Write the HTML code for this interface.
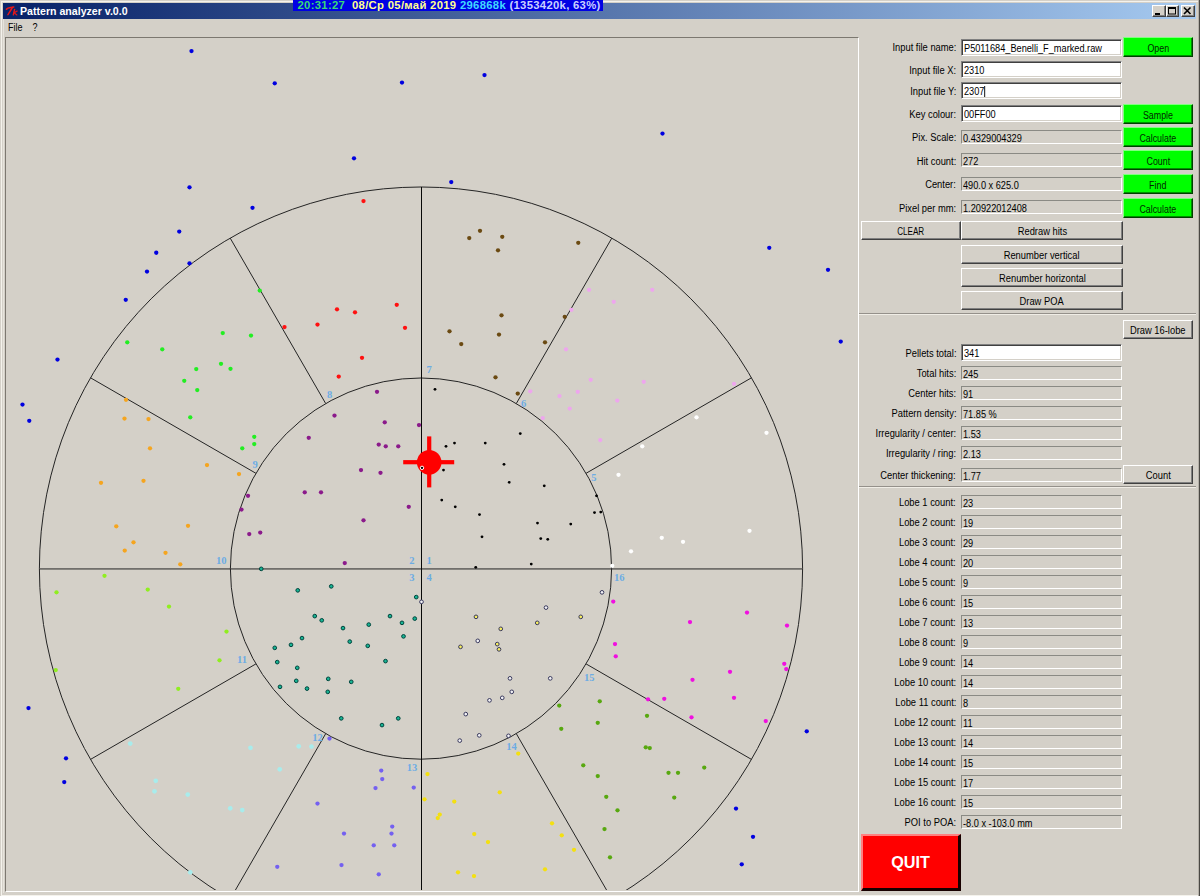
<!DOCTYPE html>
<html><head><meta charset="utf-8"><title>Pattern analyzer v.0.0</title>
<style>
html,body{margin:0;padding:0}
body{width:1200px;height:896px;overflow:hidden;background:#d4d0c8;position:relative;font-family:"Liberation Sans",sans-serif;font-size:10px;color:#000}
div{box-sizing:border-box}
#title{position:absolute;left:3px;top:3px;width:1193px;height:16px;background:linear-gradient(90deg,#0a246a 0%,#0a246a 2%,#a6caf0 100%)}
#title .ico{position:absolute;left:2.2px;top:2.1px}
#title .tt{position:absolute;left:17px;top:0;height:16px;line-height:16px;color:#fff;font-weight:bold;font-size:10.6px;white-space:nowrap}
.wb{position:absolute;top:2px;width:13.5px;height:12px;background:#d4d0c8;border:1px solid;border-color:#fff #404040 #404040 #fff;box-shadow:inset -1px -1px 0 #808080}
#ovl{position:absolute;left:293px;top:0;width:309.5px;height:11px;background:#0000e4;color:#fff;font-weight:bold;font-size:11.3px;line-height:11px;white-space:nowrap;overflow:hidden;padding-left:4.5px;letter-spacing:0.3px}
#frame{position:absolute;left:1px;top:1px;width:1199px;height:895px;border:1px solid;border-color:#f4f2ec transparent #f4f2ec #f4f2ec;border-right:0;pointer-events:none}
#frameR{position:absolute;left:1198px;top:0;width:2px;height:896px;background:linear-gradient(90deg,#b4b0a8 0,#b4b0a8 45%,#4a4844 45%,#4a4844 100%)}
#menu{position:absolute;left:8px;top:21px;height:14px;line-height:14px;white-space:pre;transform:scaleX(.9);transform-origin:0 50%}
#canvas{position:absolute;left:5px;top:37px;width:854px;height:855px;border:1px solid;border-color:#7c7870 #fff #fff #7c7870}
.lb{position:absolute;left:700px;width:256px;height:16px;line-height:16px;text-align:right;white-space:nowrap}
.en{position:absolute;left:961px;width:161px;white-space:nowrap}
.en.ed{height:17px;line-height:12px;padding-top:3.1px;background:#fff;border:1px solid;border-color:#808080 #fff #fff #808080;padding-left:2px;box-shadow:inset 1px 1px 0 #404040,inset -1px -1px 0 #d4d0c8}
.en.ro{height:14px;line-height:12px;padding-top:2px;background:#d4d0c8;border:1px solid;border-color:#8a8a84 #fff #fff #8a8a84;padding-left:0.6px}
.lb span{display:inline-block;transform:scaleX(.935);transform-origin:100% 50%}
.en span{display:inline-block;transform:scaleX(.92);transform-origin:0 50%}
.bt span{display:inline-block;transform:scaleX(.935);transform-origin:50% 50%}
.caret{display:inline-block;width:1px;height:11px;background:#000;vertical-align:-2px}
.bt{position:absolute;text-align:center;white-space:nowrap;background:#d4d0c8;border:1px solid;border-color:#fff #404040 #404040 #fff;box-shadow:inset -1px -1px 0 #808080}
.bt.g span{transform:scaleX(.885)}
.bt.g{color:#002800;background:#00ff00;border-color:#80ff80 #004000 #004000 #80ff80;box-shadow:inset -1px -1px 0 #009000}
.sep{position:absolute;left:859px;width:337px;height:2px;border-top:1px solid #94908a;border-bottom:1px solid #f0ede6}
.quit{position:absolute;left:861px;top:834px;width:100px;height:56.6px;background:#ff0000;color:#fff;font-weight:bold;font-size:16.2px;line-height:52px;text-align:center;border:2px solid;border-color:#ff8080 #180000 #180000 #ff8080;border-bottom-width:3px;border-right-width:3px}
</style></head><body>
<div id="frame"></div><div id="frameR"></div>
<div id="title"><svg class="ico" width="13.6" height="12" viewBox="0 0 15 15" preserveAspectRatio="none"><g fill="none" stroke="#e81818" stroke-linecap="round"><path d="M1.6 5.2 C3.2 3.2 6.2 3.6 9.6 2.6" stroke-width="1.9"/><path d="M8.2 3 C6.6 6.2 5 9 3.2 12.2" stroke-width="1.7"/><path d="M10.6 5.6 L9.2 12.2" stroke-width="1.6"/><path d="M13.4 7.6 L10.2 9.8 L13 12.3" stroke-width="1.5"/></g></svg><span class="tt">Pattern analyzer v.0.0</span>
<div class="wb" style="left:1149px"><svg width="11" height="10" style="position:absolute;left:0;top:0"><rect x="2" y="7" width="5" height="2" fill="#000"/></svg></div>
<div class="wb" style="left:1162.6px"><svg width="11" height="10" style="position:absolute;left:0;top:0"><rect x="1.5" y="1.5" width="7" height="6.5" fill="none" stroke="#000"/><rect x="1" y="1" width="8" height="2" fill="#000"/></svg></div>
<div class="wb" style="left:1178px"><svg width="11" height="10" style="position:absolute;left:0;top:0"><path d="M2 1.5 L8.5 8 M8.5 1.5 L2 8" stroke="#000" stroke-width="1.6" fill="none"/></svg></div>
</div>
<div id="ovl"><span style="color:#38d878">20:31:27</span>&nbsp; <span style="color:#ffff90">08/Ср 05/май 2019</span> <span style="color:#40d8ff">296868k</span> <span style="color:#c8d0ff">(1353420k, 63%)</span></div>
<div style="position:absolute;left:3px;top:19px;width:1px;height:874px;background:#e6e3dc"></div>
<div id="menu">File    ?</div>
<div id="canvas"></div>
<svg id="cv" width="1200" height="896" viewBox="0 0 1200 896" style="position:absolute;left:0;top:0">
<defs><clipPath id="cp"><rect x="7" y="40" width="851" height="850"/></clipPath></defs>
<g clip-path="url(#cp)">
<g fill="none" stroke="#242424" stroke-width="1">
<circle cx="421.0" cy="568.6" r="381.6"/>
<circle cx="421.0" cy="568.6" r="190.6"/>
<line x1="39.39999999999998" y1="568.95" x2="802.6" y2="568.95"/>
<line x1="421.5" y1="187.0" x2="421.5" y2="950.2" stroke="#080808" stroke-width="1"/>
<line x1="586.06" y1="473.30" x2="751.48" y2="377.80"/>
<line x1="516.30" y1="403.54" x2="611.80" y2="238.12"/>
<line x1="325.70" y1="403.54" x2="230.20" y2="238.12"/>
<line x1="255.94" y1="473.30" x2="90.52" y2="377.80"/>
<line x1="255.94" y1="663.90" x2="90.52" y2="759.40"/>
<line x1="325.70" y1="733.66" x2="230.20" y2="899.08"/>
<line x1="516.30" y1="733.66" x2="611.80" y2="899.08"/>
<line x1="586.06" y1="663.90" x2="751.48" y2="759.40"/>
</g>
<g fill="#ff0000"><circle cx="429.2" cy="462.2" r="12.3"/><rect x="403.2" y="460.1" width="51" height="4.2"/><rect x="427.1" y="436.4" width="4.2" height="51"/></g>
<circle cx="191.50" cy="51.10" r="2.15" fill="#0000e0"/>
<circle cx="274.75" cy="83.35" r="2.15" fill="#0000e0"/>
<circle cx="189.50" cy="187.35" r="2.15" fill="#0000e0"/>
<circle cx="252.50" cy="207.85" r="2.15" fill="#0000e0"/>
<circle cx="179.25" cy="231.60" r="2.15" fill="#0000e0"/>
<circle cx="156.25" cy="252.75" r="2.15" fill="#0000e0"/>
<circle cx="402.00" cy="82.60" r="2.15" fill="#0000e0"/>
<circle cx="484.50" cy="75.10" r="2.15" fill="#0000e0"/>
<circle cx="354.00" cy="158.35" r="2.15" fill="#0000e0"/>
<circle cx="451.25" cy="182.10" r="2.15" fill="#0000e0"/>
<circle cx="662.50" cy="133.60" r="2.15" fill="#0000e0"/>
<circle cx="769.25" cy="247.85" r="2.15" fill="#0000e0"/>
<circle cx="189.50" cy="263.35" r="2.15" fill="#0000e0"/>
<circle cx="147.00" cy="271.60" r="2.15" fill="#0000e0"/>
<circle cx="125.75" cy="299.85" r="2.15" fill="#0000e0"/>
<circle cx="57.50" cy="359.60" r="2.15" fill="#0000e0"/>
<circle cx="22.50" cy="404.60" r="2.15" fill="#0000e0"/>
<circle cx="29.25" cy="420.85" r="2.15" fill="#0000e0"/>
<circle cx="828.00" cy="269.85" r="2.15" fill="#0000e0"/>
<circle cx="840.75" cy="341.60" r="2.15" fill="#0000e0"/>
<circle cx="28.50" cy="708.10" r="2.15" fill="#0000e0"/>
<circle cx="66.00" cy="758.35" r="2.15" fill="#0000e0"/>
<circle cx="64.25" cy="782.10" r="2.15" fill="#0000e0"/>
<circle cx="806.75" cy="731.35" r="2.15" fill="#0000e0"/>
<circle cx="736.00" cy="808.60" r="2.15" fill="#0000e0"/>
<circle cx="753.00" cy="836.85" r="2.15" fill="#0000e0"/>
<circle cx="741.75" cy="864.35" r="2.15" fill="#0000e0"/>
<circle cx="363.50" cy="201.10" r="2.15" fill="#ff1010"/>
<circle cx="284.50" cy="327.10" r="2.15" fill="#ff1010"/>
<circle cx="396.75" cy="304.85" r="2.15" fill="#ff1010"/>
<circle cx="337.00" cy="309.35" r="2.15" fill="#ff1010"/>
<circle cx="355.00" cy="312.35" r="2.15" fill="#ff1010"/>
<circle cx="317.50" cy="324.60" r="2.15" fill="#ff1010"/>
<circle cx="405.00" cy="327.85" r="2.15" fill="#ff1010"/>
<circle cx="362.00" cy="357.85" r="2.15" fill="#ff1010"/>
<circle cx="338.75" cy="376.60" r="2.15" fill="#ff1010"/>
<circle cx="469.25" cy="238.10" r="2.15" fill="#6b4a12"/>
<circle cx="480.00" cy="230.85" r="2.15" fill="#6b4a12"/>
<circle cx="502.25" cy="236.85" r="2.15" fill="#6b4a12"/>
<circle cx="498.00" cy="250.35" r="2.15" fill="#6b4a12"/>
<circle cx="578.25" cy="242.85" r="2.15" fill="#6b4a12"/>
<circle cx="501.50" cy="315.35" r="2.15" fill="#6b4a12"/>
<circle cx="564.75" cy="316.85" r="2.15" fill="#6b4a12"/>
<circle cx="449.50" cy="331.35" r="2.15" fill="#6b4a12"/>
<circle cx="499.00" cy="334.60" r="2.15" fill="#6b4a12"/>
<circle cx="461.25" cy="344.10" r="2.15" fill="#6b4a12"/>
<circle cx="545.00" cy="342.35" r="2.15" fill="#6b4a12"/>
<circle cx="495.50" cy="377.35" r="2.15" fill="#6b4a12"/>
<circle cx="517.75" cy="393.60" r="2.15" fill="#6b4a12"/>
<circle cx="259.75" cy="290.60" r="2.15" fill="#22ee22"/>
<circle cx="222.75" cy="333.10" r="2.15" fill="#22ee22"/>
<circle cx="251.00" cy="335.60" r="2.15" fill="#22ee22"/>
<circle cx="127.25" cy="342.35" r="2.15" fill="#22ee22"/>
<circle cx="162.25" cy="349.35" r="2.15" fill="#22ee22"/>
<circle cx="221.00" cy="363.85" r="2.15" fill="#22ee22"/>
<circle cx="230.50" cy="368.85" r="2.15" fill="#22ee22"/>
<circle cx="196.25" cy="369.10" r="2.15" fill="#22ee22"/>
<circle cx="184.25" cy="380.85" r="2.15" fill="#22ee22"/>
<circle cx="197.25" cy="390.10" r="2.15" fill="#22ee22"/>
<circle cx="190.25" cy="417.35" r="2.15" fill="#22ee22"/>
<circle cx="254.25" cy="436.85" r="2.15" fill="#22ee22"/>
<circle cx="254.25" cy="444.10" r="2.15" fill="#22ee22"/>
<circle cx="242.25" cy="448.35" r="2.15" fill="#22ee22"/>
<circle cx="126.00" cy="399.85" r="2.15" fill="#f5a51f"/>
<circle cx="124.50" cy="418.60" r="2.15" fill="#f5a51f"/>
<circle cx="148.50" cy="419.10" r="2.15" fill="#f5a51f"/>
<circle cx="150.00" cy="448.35" r="2.15" fill="#f5a51f"/>
<circle cx="207.00" cy="465.10" r="2.15" fill="#f5a51f"/>
<circle cx="239.00" cy="474.10" r="2.15" fill="#f5a51f"/>
<circle cx="101.00" cy="482.85" r="2.15" fill="#f5a51f"/>
<circle cx="143.50" cy="480.85" r="2.15" fill="#f5a51f"/>
<circle cx="116.25" cy="526.35" r="2.15" fill="#f5a51f"/>
<circle cx="188.00" cy="525.85" r="2.15" fill="#f5a51f"/>
<circle cx="133.50" cy="542.35" r="2.15" fill="#f5a51f"/>
<circle cx="124.75" cy="550.60" r="2.15" fill="#f5a51f"/>
<circle cx="165.50" cy="552.85" r="2.15" fill="#f5a51f"/>
<circle cx="180.25" cy="564.35" r="2.15" fill="#f5a51f"/>
<circle cx="377.00" cy="391.85" r="2.15" fill="#8b1a8b"/>
<circle cx="334.50" cy="415.60" r="2.15" fill="#8b1a8b"/>
<circle cx="384.75" cy="422.35" r="2.15" fill="#8b1a8b"/>
<circle cx="419.00" cy="425.10" r="2.15" fill="#8b1a8b"/>
<circle cx="308.75" cy="437.85" r="2.15" fill="#8b1a8b"/>
<circle cx="378.75" cy="444.60" r="2.15" fill="#8b1a8b"/>
<circle cx="385.75" cy="446.35" r="2.15" fill="#8b1a8b"/>
<circle cx="398.25" cy="446.35" r="2.15" fill="#8b1a8b"/>
<circle cx="248.00" cy="495.85" r="2.15" fill="#8b1a8b"/>
<circle cx="241.50" cy="509.60" r="2.15" fill="#8b1a8b"/>
<circle cx="249.25" cy="534.10" r="2.15" fill="#8b1a8b"/>
<circle cx="260.25" cy="532.60" r="2.15" fill="#8b1a8b"/>
<circle cx="361.00" cy="470.10" r="2.15" fill="#8b1a8b"/>
<circle cx="380.50" cy="472.85" r="2.15" fill="#8b1a8b"/>
<circle cx="304.75" cy="492.35" r="2.15" fill="#8b1a8b"/>
<circle cx="321.00" cy="492.35" r="2.15" fill="#8b1a8b"/>
<circle cx="408.75" cy="506.85" r="2.15" fill="#8b1a8b"/>
<circle cx="363.50" cy="520.35" r="2.15" fill="#8b1a8b"/>
<circle cx="344.75" cy="563.10" r="2.15" fill="#8b1a8b"/>
<circle cx="589.00" cy="289.85" r="2.15" fill="#eea6ee"/>
<circle cx="571.50" cy="309.85" r="2.15" fill="#eea6ee"/>
<circle cx="566.00" cy="349.35" r="2.15" fill="#eea6ee"/>
<circle cx="530.25" cy="391.35" r="2.15" fill="#eea6ee"/>
<circle cx="559.50" cy="396.10" r="2.15" fill="#eea6ee"/>
<circle cx="577.75" cy="391.85" r="2.15" fill="#eea6ee"/>
<circle cx="569.75" cy="408.60" r="2.15" fill="#eea6ee"/>
<circle cx="542.75" cy="418.10" r="2.15" fill="#eea6ee"/>
<circle cx="590.75" cy="379.85" r="2.15" fill="#eea6ee"/>
<circle cx="613.75" cy="301.85" r="2.15" fill="#eea6ee"/>
<circle cx="652.25" cy="289.85" r="2.15" fill="#eea6ee"/>
<circle cx="643.75" cy="381.85" r="2.15" fill="#eea6ee"/>
<circle cx="617.25" cy="400.60" r="2.15" fill="#eea6ee"/>
<circle cx="600.25" cy="440.10" r="2.15" fill="#eea6ee"/>
<circle cx="734.00" cy="383.85" r="2.15" fill="#eea6ee"/>
<circle cx="696.50" cy="417.35" r="2.15" fill="#ffffff"/>
<circle cx="766.50" cy="432.85" r="2.15" fill="#ffffff"/>
<circle cx="642.25" cy="446.35" r="2.15" fill="#ffffff"/>
<circle cx="618.50" cy="474.85" r="2.15" fill="#ffffff"/>
<circle cx="749.50" cy="530.85" r="2.15" fill="#ffffff"/>
<circle cx="661.75" cy="537.85" r="2.15" fill="#ffffff"/>
<circle cx="683.00" cy="541.85" r="2.15" fill="#ffffff"/>
<circle cx="631.00" cy="551.35" r="2.15" fill="#ffffff"/>
<circle cx="612.25" cy="565.85" r="2.15" fill="#ffffff"/>
<circle cx="435.00" cy="389.35" r="1.4" fill="#000000"/>
<circle cx="520.25" cy="433.60" r="1.4" fill="#000000"/>
<circle cx="454.50" cy="443.10" r="1.4" fill="#000000"/>
<circle cx="446.00" cy="446.35" r="1.4" fill="#000000"/>
<circle cx="485.25" cy="443.10" r="1.4" fill="#000000"/>
<circle cx="504.00" cy="464.35" r="1.4" fill="#000000"/>
<circle cx="443.50" cy="470.10" r="1.4" fill="#000000"/>
<circle cx="509.25" cy="482.35" r="1.4" fill="#000000"/>
<circle cx="544.25" cy="485.85" r="1.4" fill="#000000"/>
<circle cx="441.75" cy="500.10" r="1.4" fill="#000000"/>
<circle cx="455.25" cy="506.85" r="1.4" fill="#000000"/>
<circle cx="479.50" cy="514.60" r="1.4" fill="#000000"/>
<circle cx="537.50" cy="523.10" r="1.4" fill="#000000"/>
<circle cx="570.75" cy="524.10" r="1.4" fill="#000000"/>
<circle cx="482.00" cy="536.85" r="1.4" fill="#000000"/>
<circle cx="540.75" cy="538.60" r="1.4" fill="#000000"/>
<circle cx="547.75" cy="539.35" r="1.4" fill="#000000"/>
<circle cx="475.75" cy="567.35" r="1.4" fill="#000000"/>
<circle cx="531.25" cy="564.10" r="1.4" fill="#000000"/>
<circle cx="596.50" cy="495.85" r="1.4" fill="#000000"/>
<circle cx="594.50" cy="512.60" r="1.4" fill="#000000"/>
<circle cx="600.75" cy="512.10" r="1.4" fill="#000000"/>
<circle cx="422.00" cy="467.85" r="1.7" fill="#000000" stroke="#ffffff" stroke-width="1"/>
<circle cx="261.25" cy="568.85" r="1.85" fill="#18b494" stroke="#00443c" stroke-width="1.0"/>
<circle cx="297.75" cy="590.35" r="1.85" fill="#18b494" stroke="#00443c" stroke-width="1.0"/>
<circle cx="274.75" cy="647.85" r="1.85" fill="#18b494" stroke="#00443c" stroke-width="1.0"/>
<circle cx="291.00" cy="644.85" r="1.85" fill="#18b494" stroke="#00443c" stroke-width="1.0"/>
<circle cx="277.25" cy="662.10" r="1.85" fill="#18b494" stroke="#00443c" stroke-width="1.0"/>
<circle cx="297.25" cy="667.85" r="1.85" fill="#18b494" stroke="#00443c" stroke-width="1.0"/>
<circle cx="296.25" cy="680.85" r="1.85" fill="#18b494" stroke="#00443c" stroke-width="1.0"/>
<circle cx="331.25" cy="586.35" r="1.85" fill="#18b494" stroke="#00443c" stroke-width="1.0"/>
<circle cx="416.25" cy="597.10" r="1.85" fill="#18b494" stroke="#00443c" stroke-width="1.0"/>
<circle cx="314.75" cy="616.10" r="1.85" fill="#18b494" stroke="#00443c" stroke-width="1.0"/>
<circle cx="321.75" cy="620.35" r="1.85" fill="#18b494" stroke="#00443c" stroke-width="1.0"/>
<circle cx="390.00" cy="616.10" r="1.85" fill="#18b494" stroke="#00443c" stroke-width="1.0"/>
<circle cx="414.75" cy="618.60" r="1.85" fill="#18b494" stroke="#00443c" stroke-width="1.0"/>
<circle cx="402.00" cy="622.85" r="1.85" fill="#18b494" stroke="#00443c" stroke-width="1.0"/>
<circle cx="368.75" cy="624.60" r="1.85" fill="#18b494" stroke="#00443c" stroke-width="1.0"/>
<circle cx="343.00" cy="628.10" r="1.85" fill="#18b494" stroke="#00443c" stroke-width="1.0"/>
<circle cx="403.50" cy="636.35" r="1.85" fill="#18b494" stroke="#00443c" stroke-width="1.0"/>
<circle cx="302.00" cy="638.10" r="1.85" fill="#18b494" stroke="#00443c" stroke-width="1.0"/>
<circle cx="349.75" cy="641.60" r="1.85" fill="#18b494" stroke="#00443c" stroke-width="1.0"/>
<circle cx="367.75" cy="645.85" r="1.85" fill="#18b494" stroke="#00443c" stroke-width="1.0"/>
<circle cx="385.50" cy="661.10" r="1.85" fill="#18b494" stroke="#00443c" stroke-width="1.0"/>
<circle cx="328.25" cy="678.85" r="1.85" fill="#18b494" stroke="#00443c" stroke-width="1.0"/>
<circle cx="351.25" cy="681.85" r="1.85" fill="#18b494" stroke="#00443c" stroke-width="1.0"/>
<circle cx="280.00" cy="686.85" r="1.85" fill="#18b494" stroke="#00443c" stroke-width="1.0"/>
<circle cx="307.00" cy="688.60" r="1.85" fill="#18b494" stroke="#00443c" stroke-width="1.0"/>
<circle cx="327.75" cy="691.85" r="1.85" fill="#18b494" stroke="#00443c" stroke-width="1.0"/>
<circle cx="341.25" cy="718.35" r="1.85" fill="#18b494" stroke="#00443c" stroke-width="1.0"/>
<circle cx="382.00" cy="725.10" r="1.85" fill="#18b494" stroke="#00443c" stroke-width="1.0"/>
<circle cx="398.25" cy="718.35" r="1.85" fill="#18b494" stroke="#00443c" stroke-width="1.0"/>
<circle cx="421.50" cy="601.85" r="1.85" fill="#f2f2f6" stroke="#38385c" stroke-width="1.0"/>
<circle cx="546.00" cy="607.60" r="1.85" fill="#f2f2f6" stroke="#38385c" stroke-width="1.0"/>
<circle cx="477.75" cy="640.85" r="1.85" fill="#f2f2f6" stroke="#38385c" stroke-width="1.0"/>
<circle cx="510.00" cy="678.35" r="1.85" fill="#f2f2f6" stroke="#38385c" stroke-width="1.0"/>
<circle cx="550.25" cy="678.35" r="1.85" fill="#f2f2f6" stroke="#38385c" stroke-width="1.0"/>
<circle cx="602.00" cy="592.35" r="1.85" fill="#f2f2f6" stroke="#38385c" stroke-width="1.0"/>
<circle cx="511.75" cy="691.85" r="1.85" fill="#f2f2f6" stroke="#38385c" stroke-width="1.0"/>
<circle cx="502.25" cy="697.85" r="1.85" fill="#f2f2f6" stroke="#38385c" stroke-width="1.0"/>
<circle cx="489.50" cy="700.35" r="1.85" fill="#f2f2f6" stroke="#38385c" stroke-width="1.0"/>
<circle cx="465.75" cy="714.10" r="1.85" fill="#f2f2f6" stroke="#38385c" stroke-width="1.0"/>
<circle cx="479.25" cy="735.35" r="1.85" fill="#f2f2f6" stroke="#38385c" stroke-width="1.0"/>
<circle cx="459.75" cy="740.60" r="1.85" fill="#f2f2f6" stroke="#38385c" stroke-width="1.0"/>
<circle cx="508.50" cy="735.85" r="1.85" fill="#f2f2f6" stroke="#38385c" stroke-width="1.0"/>
<circle cx="476.00" cy="616.85" r="1.85" fill="#f8f060" stroke="#38385c" stroke-width="1.0"/>
<circle cx="580.75" cy="616.85" r="1.85" fill="#f8f060" stroke="#38385c" stroke-width="1.0"/>
<circle cx="537.25" cy="622.85" r="1.85" fill="#f8f060" stroke="#38385c" stroke-width="1.0"/>
<circle cx="500.75" cy="628.85" r="1.85" fill="#f8f060" stroke="#38385c" stroke-width="1.0"/>
<circle cx="460.50" cy="646.85" r="1.85" fill="#f8f060" stroke="#38385c" stroke-width="1.0"/>
<circle cx="497.25" cy="644.10" r="1.85" fill="#f8f060" stroke="#38385c" stroke-width="1.0"/>
<circle cx="499.00" cy="649.35" r="1.85" fill="#f8f060" stroke="#38385c" stroke-width="1.0"/>
<circle cx="104.50" cy="575.85" r="2.15" fill="#90ee20"/>
<circle cx="56.50" cy="592.35" r="2.15" fill="#90ee20"/>
<circle cx="147.75" cy="589.60" r="2.15" fill="#90ee20"/>
<circle cx="169.00" cy="606.60" r="2.15" fill="#90ee20"/>
<circle cx="226.50" cy="631.60" r="2.15" fill="#90ee20"/>
<circle cx="219.50" cy="660.35" r="2.15" fill="#90ee20"/>
<circle cx="55.75" cy="670.10" r="2.15" fill="#90ee20"/>
<circle cx="178.25" cy="688.85" r="2.15" fill="#90ee20"/>
<circle cx="130.25" cy="743.60" r="2.35" fill="#a8ecec"/>
<circle cx="250.50" cy="747.85" r="2.35" fill="#a8ecec"/>
<circle cx="298.75" cy="746.35" r="2.35" fill="#a8ecec"/>
<circle cx="279.75" cy="769.35" r="2.35" fill="#a8ecec"/>
<circle cx="155.75" cy="780.85" r="2.35" fill="#a8ecec"/>
<circle cx="154.50" cy="791.35" r="2.35" fill="#a8ecec"/>
<circle cx="187.75" cy="794.60" r="2.35" fill="#a8ecec"/>
<circle cx="230.25" cy="808.35" r="2.35" fill="#a8ecec"/>
<circle cx="242.25" cy="810.10" r="2.35" fill="#a8ecec"/>
<circle cx="190.25" cy="872.35" r="2.35" fill="#a8ecec"/>
<circle cx="311.50" cy="746.60" r="2.35" fill="#a8ecec"/>
<circle cx="277.25" cy="866.85" r="2.15" fill="#7460f0"/>
<circle cx="329.50" cy="738.60" r="2.15" fill="#7460f0"/>
<circle cx="381.25" cy="770.60" r="2.15" fill="#7460f0"/>
<circle cx="382.25" cy="779.10" r="2.15" fill="#7460f0"/>
<circle cx="375.50" cy="788.10" r="2.15" fill="#7460f0"/>
<circle cx="413.75" cy="787.60" r="2.15" fill="#7460f0"/>
<circle cx="317.50" cy="803.60" r="2.15" fill="#7460f0"/>
<circle cx="392.25" cy="826.60" r="2.15" fill="#7460f0"/>
<circle cx="391.50" cy="833.60" r="2.15" fill="#7460f0"/>
<circle cx="344.00" cy="833.60" r="2.15" fill="#7460f0"/>
<circle cx="373.75" cy="845.35" r="2.15" fill="#7460f0"/>
<circle cx="394.25" cy="845.35" r="2.15" fill="#7460f0"/>
<circle cx="341.50" cy="865.10" r="2.15" fill="#7460f0"/>
<circle cx="378.75" cy="874.35" r="2.15" fill="#7460f0"/>
<circle cx="427.50" cy="774.10" r="2.15" fill="#f4e010"/>
<circle cx="518.25" cy="753.60" r="2.15" fill="#f4e010"/>
<circle cx="499.75" cy="792.35" r="2.15" fill="#f4e010"/>
<circle cx="424.50" cy="799.35" r="2.15" fill="#f4e010"/>
<circle cx="454.25" cy="801.60" r="2.15" fill="#f4e010"/>
<circle cx="439.75" cy="814.60" r="2.15" fill="#f4e010"/>
<circle cx="437.75" cy="818.10" r="2.15" fill="#f4e010"/>
<circle cx="474.25" cy="834.10" r="2.15" fill="#f4e010"/>
<circle cx="488.00" cy="842.10" r="2.15" fill="#f4e010"/>
<circle cx="552.00" cy="823.35" r="2.15" fill="#f4e010"/>
<circle cx="561.75" cy="835.35" r="2.15" fill="#f4e010"/>
<circle cx="574.00" cy="849.85" r="2.15" fill="#f4e010"/>
<circle cx="545.00" cy="869.35" r="2.15" fill="#f4e010"/>
<circle cx="458.00" cy="872.35" r="2.15" fill="#f4e010"/>
<circle cx="474.00" cy="876.10" r="2.15" fill="#f4e010"/>
<circle cx="559.25" cy="705.60" r="2.15" fill="#58a810"/>
<circle cx="561.25" cy="728.85" r="2.15" fill="#58a810"/>
<circle cx="583.25" cy="765.35" r="2.15" fill="#58a810"/>
<circle cx="599.75" cy="701.35" r="2.15" fill="#58a810"/>
<circle cx="597.75" cy="722.85" r="2.15" fill="#58a810"/>
<circle cx="647.00" cy="715.85" r="2.15" fill="#58a810"/>
<circle cx="645.75" cy="747.35" r="2.15" fill="#58a810"/>
<circle cx="649.75" cy="748.10" r="2.15" fill="#58a810"/>
<circle cx="597.75" cy="776.10" r="2.15" fill="#58a810"/>
<circle cx="668.50" cy="772.85" r="2.15" fill="#58a810"/>
<circle cx="678.00" cy="772.85" r="2.15" fill="#58a810"/>
<circle cx="704.25" cy="767.60" r="2.15" fill="#58a810"/>
<circle cx="674.25" cy="797.60" r="2.15" fill="#58a810"/>
<circle cx="606.25" cy="796.85" r="2.15" fill="#58a810"/>
<circle cx="617.50" cy="810.35" r="2.15" fill="#58a810"/>
<circle cx="604.50" cy="829.10" r="2.15" fill="#58a810"/>
<circle cx="610.00" cy="857.35" r="2.15" fill="#58a810"/>
<circle cx="613.25" cy="601.60" r="2.15" fill="#f010e0"/>
<circle cx="747.00" cy="612.60" r="2.15" fill="#f010e0"/>
<circle cx="690.00" cy="622.10" r="2.15" fill="#f010e0"/>
<circle cx="787.00" cy="625.60" r="2.15" fill="#f010e0"/>
<circle cx="615.00" cy="644.10" r="2.15" fill="#f010e0"/>
<circle cx="615.75" cy="656.35" r="2.15" fill="#f010e0"/>
<circle cx="784.25" cy="663.85" r="2.15" fill="#f010e0"/>
<circle cx="786.25" cy="669.10" r="2.15" fill="#f010e0"/>
<circle cx="730.00" cy="671.85" r="2.15" fill="#f010e0"/>
<circle cx="692.50" cy="679.85" r="2.15" fill="#f010e0"/>
<circle cx="648.00" cy="699.35" r="2.15" fill="#f010e0"/>
<circle cx="664.25" cy="698.85" r="2.15" fill="#f010e0"/>
<circle cx="734.00" cy="697.85" r="2.15" fill="#f010e0"/>
<circle cx="691.50" cy="717.35" r="2.15" fill="#f010e0"/>
<circle cx="765.75" cy="721.10" r="2.15" fill="#f010e0"/>
<g font-family="'Liberation Serif', serif" font-size="10.5" font-weight="bold" fill="#6cace4" text-anchor="middle">
<text x="429.0" y="563.6">1</text>
<text x="411.8" y="563.6">2</text>
<text x="411.8" y="580.6">3</text>
<text x="429.0" y="580.6">4</text>
<text x="593.8" y="480.9">5</text>
<text x="523.5" y="406.9">6</text>
<text x="429.0" y="372.6">7</text>
<text x="329.5" y="398.4">8</text>
<text x="255.0" y="468.1">9</text>
<text x="221.2" y="563.6">10</text>
<text x="242.0" y="663.1">11</text>
<text x="317.5" y="741.1">12</text>
<text x="412.0" y="770.9">13</text>
<text x="511.5" y="749.6">14</text>
<text x="589.2" y="680.6">15</text>
<text x="619.2" y="580.9">16</text>
</g>
</g></svg>
<div class="lb" style="top:40.449999999999996px"><span>Input file name:</span></div>
<div class="en ed" style="top:39px"><span>P5011684_Benelli_F_marked.raw</span></div>
<div class="bt g" style="left:1123px;top:37.05px;width:70px;height:20px;line-height:21.2px"><span>Open</span></div>
<div class="lb" style="top:62.800000000000004px"><span>Input file X:</span></div>
<div class="en ed" style="top:61px"><span>2310</span></div>
<div class="lb" style="top:84.10000000000001px"><span>Input file Y:</span></div>
<div class="en ed" style="top:82px"><span>2307<i class=caret></i></span></div>
<div class="lb" style="top:106.95px"><span>Key colour:</span></div>
<div class="en ed" style="top:105px"><span>00FF00</span></div>
<div class="bt g" style="left:1123px;top:103.55px;width:70px;height:20px;line-height:21.2px"><span>Sample</span></div>
<div class="lb" style="top:130.0px"><span>Pix. Scale:</span></div>
<div class="en ro" style="top:130px"><span>0.4329004329</span></div>
<div class="bt g" style="left:1123px;top:126.6px;width:70px;height:20px;line-height:21.2px"><span>Calculate</span></div>
<div class="lb" style="top:153.8px"><span>Hit count:</span></div>
<div class="en ro" style="top:153px"><span>272</span></div>
<div class="bt g" style="left:1123px;top:150.4px;width:70px;height:20px;line-height:21.2px"><span>Count</span></div>
<div class="lb" style="top:177.1px"><span>Center:</span></div>
<div class="en ro" style="top:177px"><span>490.0 x 625.0</span></div>
<div class="bt g" style="left:1123px;top:173.7px;width:70px;height:20px;line-height:21.2px"><span>Find</span></div>
<div class="lb" style="top:200.9px"><span>Pixel per mm:</span></div>
<div class="en ro" style="top:200px"><span>1.20922012408</span></div>
<div class="bt g" style="left:1123px;top:197.5px;width:70px;height:20px;line-height:21.2px"><span>Calculate</span></div>
<div class="bt" style="left:861px;top:221.2px;width:100px;height:19px;line-height:19.6px"><span style="transform:scaleX(.81)">CLEAR</span></div>
<div class="bt" style="left:961px;top:221.2px;width:162px;height:19px;line-height:19.6px"><span>Redraw hits</span></div>
<div class="bt" style="left:961px;top:244.8px;width:162px;height:19px;line-height:19.6px"><span>Renumber vertical</span></div>
<div class="bt" style="left:961px;top:268.0px;width:162px;height:19px;line-height:19.6px"><span>Renumber horizontal</span></div>
<div class="bt" style="left:961px;top:291.2px;width:162px;height:19px;line-height:19.6px"><span>Draw POA</span></div>
<div class="sep" style="top:313px"></div>
<div class="bt" style="left:1123px;top:320.0px;width:70px;height:19px;line-height:19.6px"><span>Draw 16-lobe</span></div>
<div class="lb" style="top:345.7px"><span>Pellets total:</span></div>
<div class="en ed" style="top:344px"><span>341</span></div>
<div class="lb" style="top:366.4px"><span>Total hits:</span></div>
<div class="en ro" style="top:366px"><span>245</span></div>
<div class="lb" style="top:386.4px"><span>Center hits:</span></div>
<div class="en ro" style="top:386px"><span>91</span></div>
<div class="lb" style="top:406.4px"><span>Pattern density:</span></div>
<div class="en ro" style="top:406px"><span>71.85 %</span></div>
<div class="lb" style="top:426.4px"><span>Irregularity / center:</span></div>
<div class="en ro" style="top:426px"><span>1.53</span></div>
<div class="lb" style="top:446.4px"><span>Irregularity / ring:</span></div>
<div class="en ro" style="top:446px"><span>2.13</span></div>
<div class="lb" style="top:468.4px"><span>Center thickening:</span></div>
<div class="en ro" style="top:468px"><span>1.77</span></div>
<div class="bt" style="left:1123px;top:464.9px;width:70px;height:19px;line-height:19.6px"><span>Count</span></div>
<div class="sep" style="top:486px"></div>
<div class="lb" style="top:495.29999999999995px"><span>Lobe 1 count:</span></div>
<div class="en ro" style="top:495px"><span>23</span></div>
<div class="lb" style="top:515.3px"><span>Lobe 2 count:</span></div>
<div class="en ro" style="top:515px"><span>19</span></div>
<div class="lb" style="top:535.3px"><span>Lobe 3 count:</span></div>
<div class="en ro" style="top:535px"><span>29</span></div>
<div class="lb" style="top:555.3px"><span>Lobe 4 count:</span></div>
<div class="en ro" style="top:555px"><span>20</span></div>
<div class="lb" style="top:575.3px"><span>Lobe 5 count:</span></div>
<div class="en ro" style="top:575px"><span>9</span></div>
<div class="lb" style="top:595.3px"><span>Lobe 6 count:</span></div>
<div class="en ro" style="top:595px"><span>15</span></div>
<div class="lb" style="top:615.3px"><span>Lobe 7 count:</span></div>
<div class="en ro" style="top:615px"><span>13</span></div>
<div class="lb" style="top:635.3px"><span>Lobe 8 count:</span></div>
<div class="en ro" style="top:635px"><span>9</span></div>
<div class="lb" style="top:655.3px"><span>Lobe 9 count:</span></div>
<div class="en ro" style="top:655px"><span>14</span></div>
<div class="lb" style="top:675.3px"><span>Lobe 10 count:</span></div>
<div class="en ro" style="top:675px"><span>14</span></div>
<div class="lb" style="top:695.3px"><span>Lobe 11 count:</span></div>
<div class="en ro" style="top:695px"><span>8</span></div>
<div class="lb" style="top:715.3px"><span>Lobe 12 count:</span></div>
<div class="en ro" style="top:715px"><span>11</span></div>
<div class="lb" style="top:735.3px"><span>Lobe 13 count:</span></div>
<div class="en ro" style="top:735px"><span>14</span></div>
<div class="lb" style="top:755.3px"><span>Lobe 14 count:</span></div>
<div class="en ro" style="top:755px"><span>15</span></div>
<div class="lb" style="top:775.3px"><span>Lobe 15 count:</span></div>
<div class="en ro" style="top:775px"><span>17</span></div>
<div class="lb" style="top:795.3px"><span>Lobe 16 count:</span></div>
<div class="en ro" style="top:795px"><span>15</span></div>
<div class="lb" style="top:815.4px"><span>POI to POA:</span></div>
<div class="en ro" style="top:815px"><span>-8.0 x -103.0 mm</span></div>
<div class="quit">QUIT</div>
</body></html>
